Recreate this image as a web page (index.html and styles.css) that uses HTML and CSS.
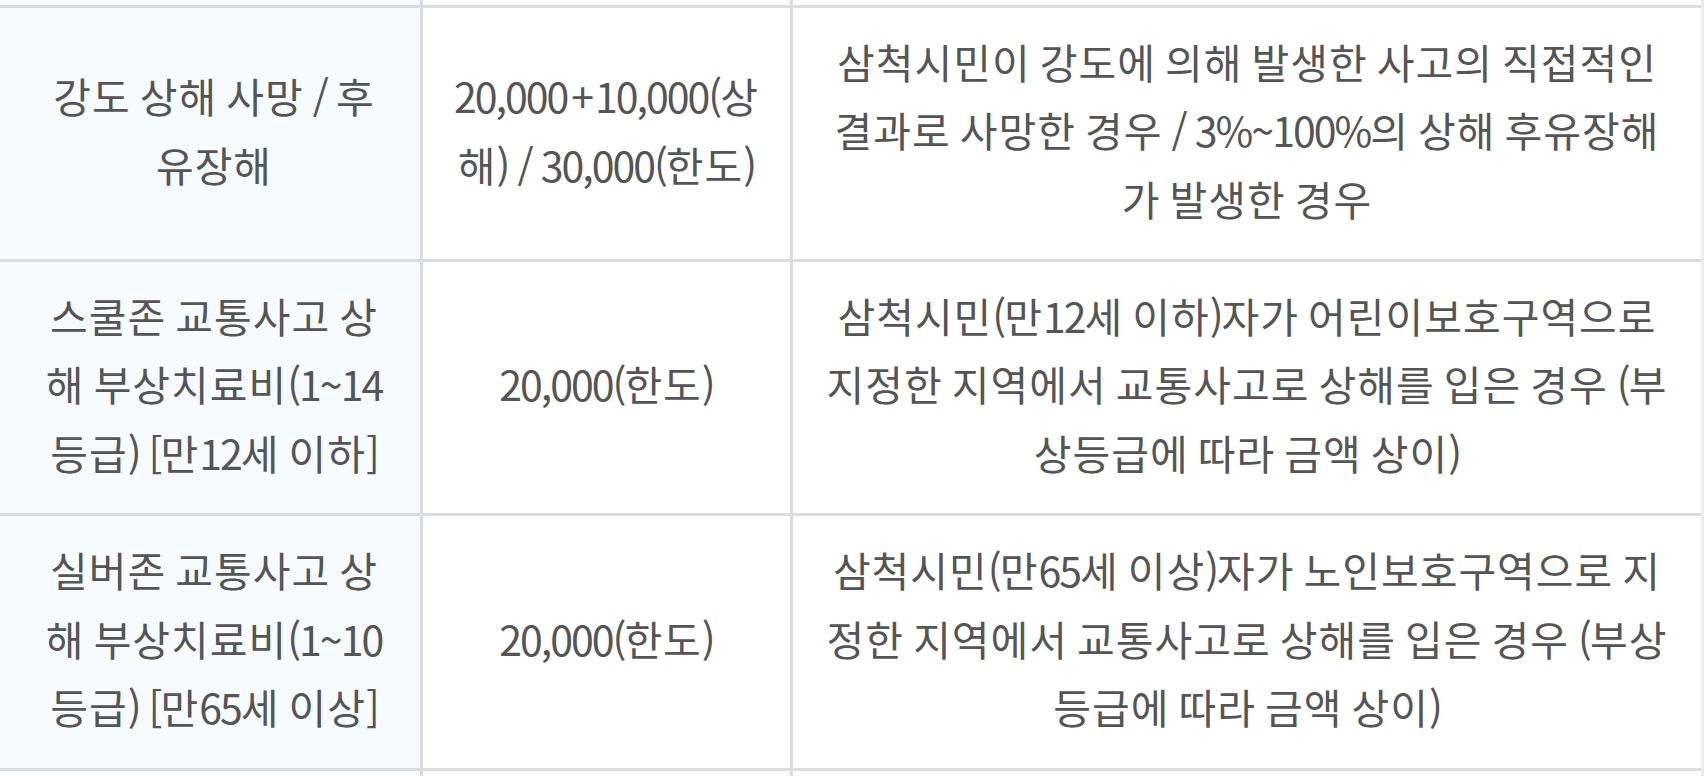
FILE: index.html
```html
<!DOCTYPE html>
<html lang="ko">
<head>
<meta charset="utf-8">
<title>시민안전보험 보장 내용</title>
<link rel="stylesheet" href="styles.css">
</head>
<body>
<div class="sheet">
  <div class="cell name stub"></div>
  <div class="cell amount stub"></div>
  <div class="cell desc stub"></div>

  <div class="cell name"><p>강도 상해 사망 <span class="n">/</span> 후<br>유장해</p></div>
  <div class="cell amount"><p><span class="n">20,000</span><span class="plus">+</span><span class="n">10,000(</span>상<br>해<span class="n">)</span> <span class="n">/</span> <span class="n">30,000(</span>한도<span class="n">)</span></p></div>
  <div class="cell desc"><p>삼척시민이 강도에 의해 발생한 사고의 직접적인<br>결과로 사망한 경우 <span class="n">/</span> <span class="n">3%~100%</span>의 상해 후유장해<br>가 발생한 경우</p></div>

  <div class="cell name"><p>스쿨존 교통사고 상<br>해 부상치료비<span class="n">(1~14</span><br>등급<span class="n">)</span> <span class="n">[</span>만<span class="n">12</span>세 이하<span class="n">]</span></p></div>
  <div class="cell amount"><p><span class="n">20,000(</span>한도<span class="n">)</span></p></div>
  <div class="cell desc"><p>삼척시민<span class="n">(</span>만<span class="n">12</span>세 이하<span class="n">)</span>자가 어린이보호구역으로<br>지정한 지역에서 교통사고로 상해를 입은 경우 <span class="n">(</span>부<br>상등급에 따라 금액 상이<span class="n">)</span></p></div>

  <div class="cell name"><p>실버존 교통사고 상<br>해 부상치료비<span class="n">(1~10</span><br>등급<span class="n">)</span> <span class="n">[</span>만<span class="n">65</span>세 이상<span class="n">]</span></p></div>
  <div class="cell amount"><p><span class="n">20,000(</span>한도<span class="n">)</span></p></div>
  <div class="cell desc"><p>삼척시민<span class="n">(</span>만<span class="n">65</span>세 이상<span class="n">)</span>자가 노인보호구역으로 지<br>정한 지역에서 교통사고로 상해를 입은 경우 <span class="n">(</span>부상<br>등급에 따라 금액 상이<span class="n">)</span></p></div>

  <div class="cell name stub"></div>
  <div class="cell amount stub"></div>
  <div class="cell desc stub"></div>
</div>
</body>
</html>
```

FILE: styles.css
```css
html, body {
  margin: 0;
  padding: 0;
  background: #ffffff;
}

body {
  width: 1704px;
  height: 776px;
  overflow: hidden;
  font-family: "Noto Sans CJK KR", "Noto Sans", sans-serif;
  color: #555555;
}

.sheet {
  display: grid;
  grid-template-columns: 420px 367px 908px;
  grid-template-rows: 5px 251px 251px 252px 5px;
  gap: 3px;
  width: 1701px;
  background: #dcdcdc;
  border-right: 3px solid #ececec;
}

.cell {
  display: flex;
  align-items: center;
  justify-content: center;
  text-align: center;
  font-size: 41px;
  line-height: 68.5px;
  letter-spacing: 1px;
  word-spacing: -3.4px;
  background: #ffffff;
  box-sizing: border-box;
  padding: 0 4px 8px;
  white-space: nowrap;
}

.cell p {
  margin: 0;
}

/* numerals and punctuation sit tighter than hangul */
.cell .n {
  letter-spacing: -2px;
}

.cell .plus {
  letter-spacing: 0;
  margin: 0 1px 0 4px;
}

.cell.name {
  background: #f5fbfe;
  padding: 0 0 8px 8px;
}

.cell.stub {
  padding: 0;
}
```
